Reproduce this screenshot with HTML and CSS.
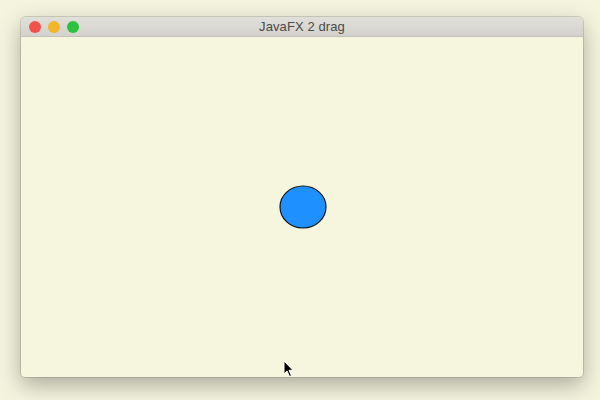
FILE: index.html
```html
<!DOCTYPE html>
<html>
<head>
<meta charset="utf-8">
<title>JavaFX 2 drag</title>
<link rel="stylesheet" href="styles.css">
</head>
<body>
<div class="desktop">
  <div class="window">
    <div class="titlebar">
      <div class="lights">
        <span class="light red"></span>
        <span class="light yellow"></span>
        <span class="light green"></span>
      </div>
      <div class="title">JavaFX 2 drag</div>
    </div>
    <div class="content">
      <svg class="circle" width="50" height="46" viewBox="0 0 50 46">
        <ellipse cx="25" cy="23" rx="23" ry="21" fill="#1e90ff" stroke="#111" stroke-width="1.2"/>
      </svg>
    </div>
  </div>
  <svg class="cursor" width="12" height="18" viewBox="0 0 12 18">
    <path d="M1 1 L1 14 L4 11 L6.5 16.5 L8.5 15.6 L6 10.3 L10 10.3 Z" fill="#000" stroke="#fff" stroke-width="1"/>
  </svg>
</div>
</body>
</html>
```
FILE: styles.css
```css
html, body {
  margin: 0;
  padding: 0;
  width: 600px;
  height: 400px;
  overflow: hidden;
  background: #f5f4de;
  font-family: "Helvetica Neue", "Liberation Sans", Arial, sans-serif;
}
.desktop {
  position: relative;
  width: 600px;
  height: 400px;
  padding: 17px 0 0 21px;
  box-sizing: border-box;
}
.window {
  width: 562px;
  height: 360px;
  display: flex;
  flex-direction: column;
  border-radius: 5px 5px 4px 4px;
  overflow: hidden;
  box-shadow: 0 8px 22px rgba(60, 60, 60, 0.4), 0 0 0 1px rgba(150, 150, 140, 0.35);
  background: #f6f5de;
}
.titlebar {
  height: 19px;
  flex: none;
  position: relative;
  display: flex;
  align-items: center;
  justify-content: center;
  background: linear-gradient(#e0dfda, #d3d2cc);
  border-bottom: 1px solid #c4c3bb;
}
.lights {
  position: absolute;
  left: 8px;
  top: 4px;
  display: flex;
  gap: 7px;
}
.light {
  width: 12px;
  height: 12px;
  border-radius: 50%;
  display: block;
}
.red { background: #f2524c; }
.yellow { background: #f3b52a; }
.green { background: #2bc33b; }
.title {
  font-size: 13px;
  color: #4a4a4a;
  letter-spacing: 0.1px;
}
.content {
  flex: 1;
  display: flex;
  align-items: center;
  justify-content: center;
  padding-left: 2px;
}
.circle {
  display: block;
}
.cursor {
  position: absolute;
  left: 283px;
  top: 360px;
}
```
